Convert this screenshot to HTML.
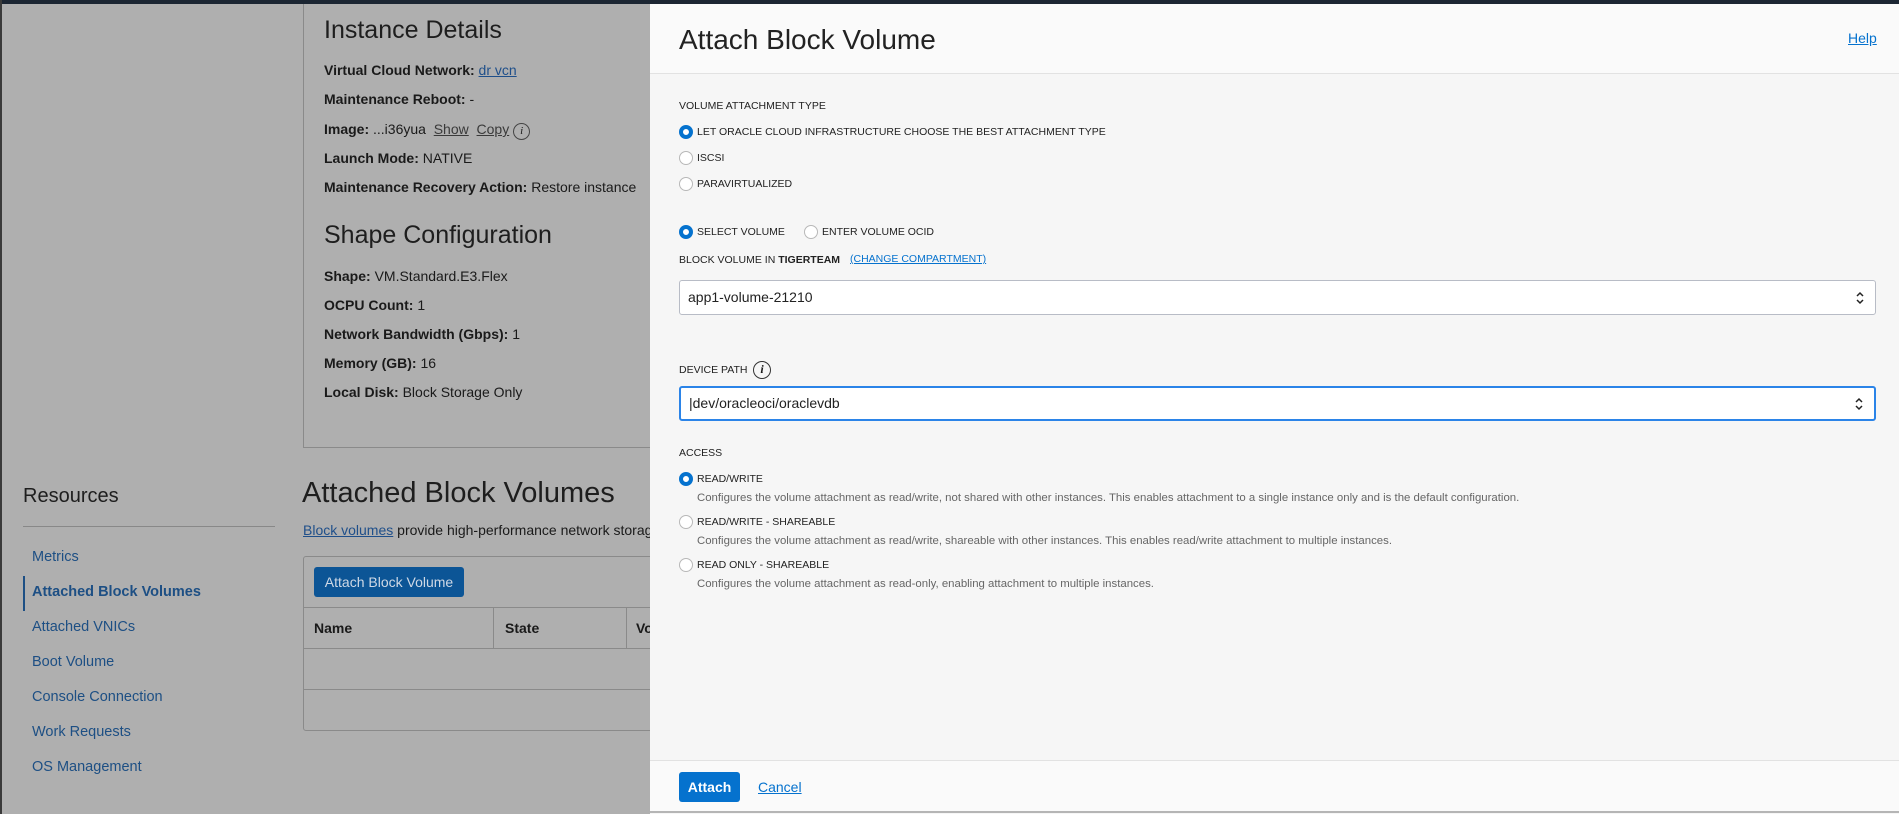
<!DOCTYPE html>
<html><head><meta charset="utf-8"><style>
*{box-sizing:border-box;margin:0;padding:0}
body{width:1899px;height:814px;position:relative;overflow:hidden;background:#afafaf;font-family:"Liberation Sans",sans-serif;color:#1a1a1a}
.a{position:absolute;white-space:nowrap}
.top{left:0;top:0;width:1899px;height:4px;background:#1c2633}
.ls{left:0;top:0;width:2px;height:814px;background:#3a3a3a}
.h2{font-size:25px;color:#1e1e1e}
.row{font-size:14px;color:#1a1a1a}
.row b{font-weight:bold}
.lnk{color:#1f4f8a;text-decoration:underline}
.menu{font-size:14.5px;color:#1d4f84}
.modal{left:650px;top:4px;width:1249px;height:810px;background:#f6f6f6}
.mh{left:0;top:0;width:1249px;height:70px;background:#fafafa;border-bottom:1px solid #e2e2e2}
.mf{left:0;top:756px;width:1249px;height:53px;background:#fafafa;border-top:1px solid #e2e2e2;border-bottom:2px solid #b5b5b5}
.lab{font-size:10.5px;color:#222}
.rad{width:14px;height:14px;border-radius:50%;border:1px solid #b8b8b8;background:#fff}
.rad.on{border:4px solid #0572ce;background:#fff}
.desc{font-size:11.4px;color:#666}
.sel{background:#fff;border:1px solid #b8bcc6;border-radius:3px;font-size:14px;color:#222;padding-left:8px}
.arr{position:absolute;right:10px;top:50%;transform:translateY(-50%)}
</style></head><body>
<div class="a top"></div>
<div class="a ls"></div>
<div class="a" style="left:303px;top:4px;width:1px;height:444px;background:#8a8a8a"></div>
<div class="a" style="left:303px;top:447px;width:360px;height:1px;background:#8a8a8a"></div>
<div class="a h2" style="left:324px;top:16px">Instance Details</div>
<div class="a row" style="left:324px;top:62px"><b>Virtual Cloud Network:</b> <span class="lnk">dr vcn</span></div>
<div class="a row" style="left:324px;top:91px"><b>Maintenance Reboot:</b> -</div>
<div class="a row" style="left:324px;top:121px"><b>Image:</b> ...i36yua &nbsp;<span style="text-decoration:underline;color:#3a3a3a">Show</span> &nbsp;<span style="text-decoration:underline;color:#3a3a3a">Copy</span> <span style="display:inline-block;width:17px;height:17px;border:1px solid #444;border-radius:50%;font-size:11px;text-align:center;line-height:15px;font-style:italic;font-family:'Liberation Serif',serif">i</span></div>
<div class="a row" style="left:324px;top:150px"><b>Launch Mode:</b> NATIVE</div>
<div class="a row" style="left:324px;top:179px"><b>Maintenance Recovery Action:</b> Restore instance</div>
<div class="a h2" style="left:324px;top:221px">Shape Configuration</div>
<div class="a row" style="left:324px;top:268px"><b>Shape:</b> VM.Standard.E3.Flex</div>
<div class="a row" style="left:324px;top:297px"><b>OCPU Count:</b> 1</div>
<div class="a row" style="left:324px;top:326px"><b>Network Bandwidth (Gbps):</b> 1</div>
<div class="a row" style="left:324px;top:355px"><b>Memory (GB):</b> 16</div>
<div class="a row" style="left:324px;top:384px"><b>Local Disk:</b> Block Storage Only</div>

<div class="a" style="left:23px;top:485px;font-size:20px;color:#1e1e1e">Resources</div>
<div class="a" style="left:23px;top:526px;width:252px;height:1px;background:#888"></div>
<div class="a menu" style="left:32px;top:549px">Metrics</div>
<div class="a" style="left:23px;top:576px;width:2px;height:35px;background:#1d4f84"></div>
<div class="a menu" style="left:32px;top:584px;font-weight:bold">Attached Block Volumes</div>
<div class="a menu" style="left:32px;top:619px">Attached VNICs</div>
<div class="a menu" style="left:32px;top:654px">Boot Volume</div>
<div class="a menu" style="left:32px;top:689px">Console Connection</div>
<div class="a menu" style="left:32px;top:724px">Work Requests</div>
<div class="a menu" style="left:32px;top:759px">OS Management</div>

<div class="a" style="left:302px;top:477px;font-size:29px;color:#1e1e1e">Attached Block Volumes</div>
<div class="a row" style="left:303px;top:522px"><span class="lnk">Block volumes</span> provide high-performance network storage</div>
<div class="a" style="left:303px;top:556px;width:400px;height:175px;border:1px solid #8a8a8a;border-radius:3px"></div>
<div class="a" style="left:314px;top:567px;width:150px;height:30px;background:#0c5596;border-radius:3px;color:#cfd9e6;font-size:14px;line-height:30px;text-align:center">Attach Block Volume</div>
<div class="a" style="left:304px;top:607px;width:400px;height:1px;background:#8a8a8a"></div>
<div class="a" style="left:304px;top:648px;width:400px;height:1px;background:#8a8a8a"></div>
<div class="a" style="left:304px;top:689px;width:400px;height:1px;background:#8a8a8a"></div>
<div class="a" style="left:493px;top:607px;width:1px;height:41px;background:#8a8a8a"></div>
<div class="a" style="left:626px;top:607px;width:1px;height:41px;background:#8a8a8a"></div>
<div class="a row" style="left:314px;top:620px;font-weight:bold">Name</div>
<div class="a row" style="left:505px;top:620px;font-weight:bold">State</div>
<div class="a row" style="left:636px;top:620px;font-weight:bold">Vo</div>

<div class="a modal">
 <div class="a mh"></div>
 <div class="a" style="left:29px;top:20px;font-size:28px;color:#222">Attach Block Volume</div>
 <div class="a" style="left:1198px;top:26px;font-size:14px;color:#0572ce;text-decoration:underline">Help</div>
 <div class="a lab" style="left:29px;top:96px">VOLUME ATTACHMENT TYPE</div>
 <div class="a rad on" style="left:29px;top:121px"></div><div class="a lab" style="left:47px;top:122px">LET ORACLE CLOUD INFRASTRUCTURE CHOOSE THE BEST ATTACHMENT TYPE</div>
 <div class="a rad" style="left:29px;top:147px"></div><div class="a lab" style="left:47px;top:148px">ISCSI</div>
 <div class="a rad" style="left:29px;top:173px"></div><div class="a lab" style="left:47px;top:174px">PARAVIRTUALIZED</div>
 <div class="a rad on" style="left:29px;top:221px"></div><div class="a lab" style="left:47px;top:222px">SELECT VOLUME</div>
 <div class="a rad" style="left:154px;top:221px"></div><div class="a lab" style="left:172px;top:222px">ENTER VOLUME OCID</div>
 <div class="a lab" style="left:29px;top:250px">BLOCK VOLUME IN <b>TIGERTEAM</b></div>
 <div class="a lab" style="left:200px;top:249px;font-size:10.5px;color:#0572ce;text-decoration:underline">(CHANGE COMPARTMENT)</div>
 <div class="a sel" style="left:29px;top:276px;width:1197px;height:35px;line-height:33px">app1-volume-21210<svg class="arr" width="10" height="16" viewBox="0 0 10 16"><path d="M2 6 L5 3 L8 6 M2 10 L5 13 L8 10" fill="none" stroke="#222" stroke-width="1.5"/></svg></div>
 <div class="a lab" style="left:29px;top:360px">DEVICE PATH</div>
 <div class="a" style="left:103px;top:357px;width:18px;height:18px;border:1.5px solid #333;border-radius:50%;font-size:12px;text-align:center;line-height:15px;font-style:italic;font-family:'Liberation Serif',serif;font-weight:bold">i</div>
 <div class="a sel" style="left:29px;top:382px;width:1197px;height:35px;line-height:31px;border:2px solid #2b84e8">|dev/oracleoci/oraclevdb<svg class="arr" width="10" height="16" viewBox="0 0 10 16"><path d="M2 6 L5 3 L8 6 M2 10 L5 13 L8 10" fill="none" stroke="#222" stroke-width="1.5"/></svg></div>
 <div class="a lab" style="left:29px;top:443px">ACCESS</div>
 <div class="a rad on" style="left:29px;top:468px"></div><div class="a lab" style="left:47px;top:469px">READ/WRITE</div>
 <div class="a desc" style="left:47px;top:488px">Configures the volume attachment as read/write, not shared with other instances. This enables attachment to a single instance only and is the default configuration.</div>
 <div class="a rad" style="left:29px;top:511px"></div><div class="a lab" style="left:47px;top:512px">READ/WRITE - SHAREABLE</div>
 <div class="a desc" style="left:47px;top:531px">Configures the volume attachment as read/write, shareable with other instances. This enables read/write attachment to multiple instances.</div>
 <div class="a rad" style="left:29px;top:554px"></div><div class="a lab" style="left:47px;top:555px">READ ONLY - SHAREABLE</div>
 <div class="a desc" style="left:47px;top:574px">Configures the volume attachment as read-only, enabling attachment to multiple instances.</div>
 <div class="a mf"></div>
 <div class="a" style="left:29px;top:768px;width:61px;height:30px;background:#0572ce;border-radius:3px;color:#fff;font-size:14px;font-weight:bold;line-height:30px;text-align:center">Attach</div>
 <div class="a" style="left:108px;top:775px;font-size:14px;color:#0572ce;text-decoration:underline">Cancel</div>
</div>
</body></html>
